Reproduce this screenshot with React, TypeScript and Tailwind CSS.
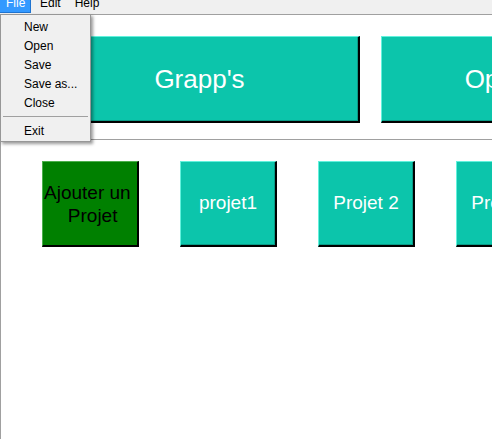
import React from 'react';

// Teal buttons share one raised bevel look
const tealBtn =
  'flex items-center justify-center bg-[#0cc5ab] text-white border-t border-l border-t-[#62f2dd] border-l-[#62f2dd] border-b-2 border-r-2 border-b-black border-r-black shadow-[inset_-1px_-1px_0_#0a9a86]';

const projects = ['projet1', 'Projet 2', 'Projet 3'];

function FileMenu() {
  const items = ['New', 'Open', 'Save', 'Save as...', 'Close'];
  return (
    <div className="absolute left-0 top-[14px] w-[91px] bg-[#f0f0f0] border border-[#979797] pt-[2px] pb-[1px] shadow-[2px_2px_3px_rgba(0,0,0,0.4)] text-[12px] text-black">
      {items.map((it) => (
        <div key={it} className="h-[19px] flex items-center pl-[23px]">
          {it}
        </div>
      ))}
      <div className="h-[9px] flex items-center px-[2px]">
        <div className="w-full h-px bg-[#a0a0a0]" />
      </div>
      <div className="h-[19px] flex items-center pl-[23px]">Exit</div>
    </div>
  );
}

export default function App() {
  return (
    <div
      className="relative w-[492px] h-[439px] bg-white overflow-hidden"
      style={{ fontFamily: '"Liberation Sans", Arial, sans-serif' }}
    >
      {/* Menu bar */}
      <div className="h-[14px] bg-[#f0f0f0] flex items-start text-[12px] text-black overflow-hidden">
        <div className="w-[31px] h-[13px] bg-[#3399ff] border-b border-r border-[#1f74d0] pl-[6px] text-white">
          <div className="-mt-[3px] leading-[13px]">File</div>
        </div>
        <div className="ml-[9px] -mt-[3px] leading-[13px]">Edit</div>
        <div className="ml-[14px] -mt-[3px] leading-[13px]">Help</div>
      </div>

      {/* Window content */}
      <div className="h-[425px] border-l border-[#a0a0a0]">
        {/* Top panel */}
        <div className="h-[126px] border-t border-b border-[#a0a0a0] flex items-start gap-[21px] pl-[39px] pt-[21px] text-[26px]">
          <div className={`${tealBtn} w-[320px] h-[87px] shrink-0`}>Grapp's</div>
          <div className={`${tealBtn} w-[320px] h-[87px] shrink-0`}>Open Project</div>
        </div>

        {/* Project buttons */}
        <div className="flex items-start gap-[41px] pl-[41px] pt-[21px] text-[19px]">
          <div className="w-[97px] h-[86px] shrink-0 flex flex-col items-center justify-center bg-[#008000] text-black leading-[23px] border-t border-l border-t-[#4cb04c] border-l-[#4cb04c] border-b-2 border-r-2 border-b-black border-r-black whitespace-pre">
            <span>{'Ajouter un '}</span>
            <span>{' Projet'}</span>
          </div>
          {projects.map((p) => (
            <div key={p} className={`${tealBtn} w-[97px] h-[86px] shrink-0 whitespace-nowrap`}>
              {p}
            </div>
          ))}
        </div>
      </div>

      <FileMenu />
    </div>
  );
}
